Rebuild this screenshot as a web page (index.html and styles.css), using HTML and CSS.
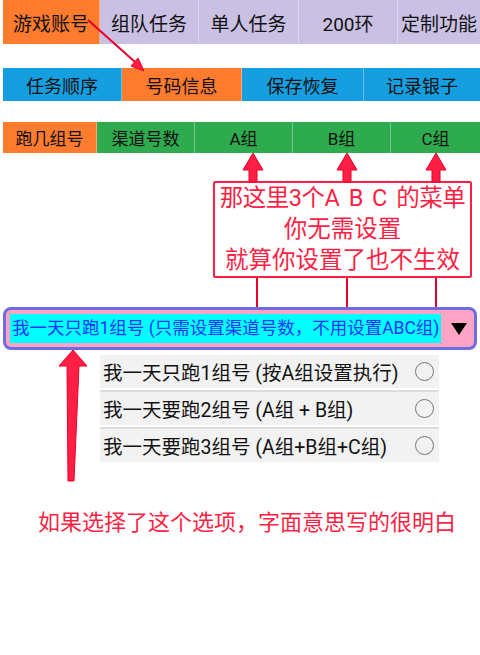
FILE: index.html
```html
<!DOCTYPE html>
<html lang="zh-CN">
<head>
  <meta charset="UTF-8">
  <meta name="viewport" content="width=device-width, initial-scale=1.0">
  <title>跑几组号说明</title>
  <link rel="stylesheet" href="styles.css">
</head>
<body>
  <div class="page">
    <div class="tabs main-tabs">
      <div class="tab orange w97">游戏账号</div>
      <div class="tab lilac w99">组队任务</div>
      <div class="tab lilac w100">单人任务</div>
      <div class="tab lilac w99">200环</div>
      <div class="tab lilac last">定制功能</div>
    </div>

    <div class="tabs sub-tabs">
      <div class="tab blue w119">任务顺序</div>
      <div class="tab orange w120">号码信息</div>
      <div class="tab blue w122">保存恢复</div>
      <div class="tab blue last">记录银子</div>
    </div>

    <div class="tabs group-tabs">
      <div class="tab orange w94">跑几组号</div>
      <div class="tab green w98">渠道号数</div>
      <div class="tab green w98">A组</div>
      <div class="tab green w98">B组</div>
      <div class="tab green last">C组</div>
    </div>

    <div class="note">
      <div class="note-first">那这里3个A B C 的菜单</div>
      <div>你无需设置</div>
      <div>就算你设置了也不生效</div>
    </div>

    <div class="select">
      <span class="select-text">我一天只跑1组号 (只需设置渠道号数，不用设置ABC组)</span>
      <span class="caret"></span>
    </div>

    <ul class="options">
      <li><span>我一天只跑1组号 (按A组设置执行)</span><i class="radio"></i></li>
      <li><span>我一天要跑2组号 (A组 + B组)</span><i class="radio"></i></li>
      <li><span>我一天要跑3组号 (A组+B组+C组)</span><i class="radio"></i></li>
    </ul>

    <p class="hint">如果选择了这个选项，字面意思写的很明白</p>

    <!-- 标注箭头 -->
    <svg class="marks" width="480" height="655" viewBox="0 0 480 655">
      <g fill="#ff1f45" stroke="#e8002a" stroke-width="1">
        <line x1="88" y1="20" x2="135" y2="62" stroke-width="2"/>
        <polygon points="144,71 131,66 138,58"/>

        <polygon points="253,153 263,170 257,170 257,182 249,182 249,170 243,170"/>
        <polygon points="347,153 357,170 351,170 351,182 343,182 343,170 337,170"/>
        <polygon points="436,153 446,170 440,170 440,182 432,182 432,170 426,170"/>

        <line x1="257" y1="278" x2="257" y2="307" stroke-width="2"/>
        <line x1="347" y1="278" x2="347" y2="307" stroke-width="2"/>
        <line x1="436" y1="278" x2="436" y2="307" stroke-width="2"/>

        <polygon points="73,350 87,366 79,366 74,481 68,481 67,366 59,366"/>
      </g>
    </svg>
  </div>
</body>
</html>
```

FILE: styles.css
```css
body {
  margin: 0;
  background-color: #fff;
  font-family: Roboto, "Noto Sans CJK SC", sans-serif;
  color: #111;
}

.page {
  position: relative;
  width: 480px;
  height: 655px;
  padding-left: 3px;
  box-sizing: border-box;
  overflow: hidden;
}

.tabs {
  display: flex;
}

.tab {
  display: flex;
  justify-content: center;
  align-items: center;
  box-sizing: border-box;
  border-right: 1px solid rgba(255,255,255,0.35);
}

.tab.last {
  flex: 1;
  border-right: none;
}

.w94 { width: 94px; }
.w97 { width: 97px; }
.w98 { width: 98px; }
.w99 { width: 99px; }
.w100 { width: 100px; }
.w119 { width: 119px; }
.w120 { width: 120px; }
.w122 { width: 122px; }

.orange { background-color: #ff7b2e; }
.lilac { background-color: #c9c0e4; }
.blue { background-color: #169fe0; }
.green { background-color: #2fab4f; }

.main-tabs {
  height: 44px;
  font-size: 19px;
}

.sub-tabs {
  height: 33px;
  margin-top: 24px;
  font-size: 18px;
}

.group-tabs {
  height: 31px;
  margin-top: 21px;
  font-size: 17px;
}

.note {
  width: 259px;
  height: 97px;
  margin: 28px 0 0 210px;
  box-sizing: border-box;
  border: 2px solid #ff1f45;
  border-radius: 2px;
  color: #ff1f45;
  font-size: 23.5px;
  line-height: 31px;
  text-align: center;
  white-space: nowrap;
}

.note-first {
  word-spacing: 4px;
  letter-spacing: -0.5px;
}

.select {
  display: flex;
  align-items: center;
  width: 474px;
  height: 43px;
  margin-top: 29px;
  box-sizing: border-box;
  border: 3px solid #6d6ce2;
  border-radius: 8px;
  background-color: #ffa4c4;
}

.select-text {
  margin-left: 4px;
  padding: 0 2px;
  height: 29px;
  line-height: 29px;
  background-color: #00ffff;
  color: #1d35ff;
  font-size: 17.5px;
  white-space: nowrap;
}

.caret {
  margin: 0 7px 0 auto;
  width: 0;
  height: 0;
  border-left: 8px solid transparent;
  border-right: 8px solid transparent;
  border-top: 12px solid #000;
}

.options {
  list-style: none;
  width: 339px;
  margin: 5px 0 0 97px;
  padding: 0;
}

.options li {
  display: flex;
  align-items: center;
  justify-content: space-between;
  height: 33px;
  padding: 0 5px 0 3px;
  background-color: #f2f2f2;
  font-size: 19.5px;
  white-space: nowrap;
}

.options li + li {
  border-top: 2px solid #dcdcdc;
  margin-top: 2px;
}

.radio {
  width: 17px;
  height: 17px;
  border: 1.5px solid #777;
  border-radius: 50%;
}

.hint {
  margin: 46px 0 0 35px;
  color: #ff1f45;
  font-size: 22px;
  line-height: 30px;
}

.marks {
  position: absolute;
  top: 0;
  left: 0;
  pointer-events: none;
}
```
